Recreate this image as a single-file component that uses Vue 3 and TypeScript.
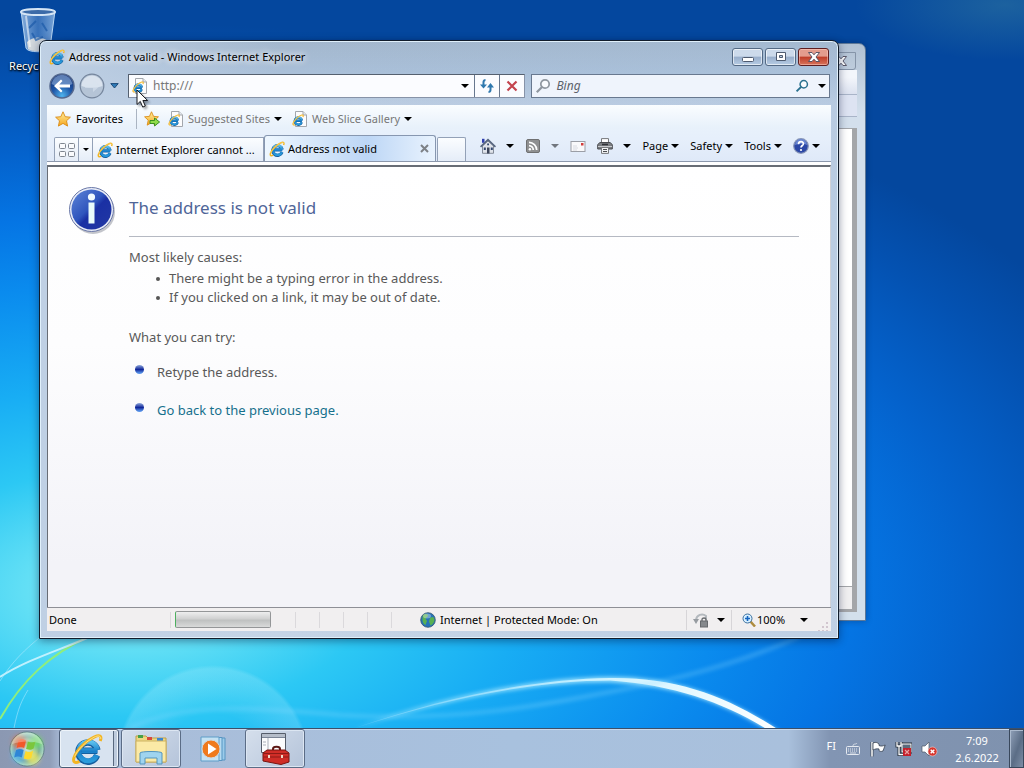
<script setup lang="ts">
import { ref } from 'vue'

interface MenuItem {
  id: string
  icon?: string
  text?: string
  arrow?: boolean
  dim?: boolean
}

const address = ref('http:///')
const query = ref('')

const commands: MenuItem[] = [
  { id: 'Home', icon: 'home', arrow: true },
  { id: 'Feeds', icon: 'rss', arrow: true, dim: true },
  { id: 'Read mail', icon: 'mail' },
  { id: 'Print', icon: 'print', arrow: true },
  { id: 'Page', text: 'Page', arrow: true },
  { id: 'Safety', text: 'Safety', arrow: true },
  { id: 'Tools', text: 'Tools', arrow: true },
  { id: 'Help', icon: 'help', arrow: true },
]
const causes = [
  'There might be a typing error in the address.',
  'If you clicked on a link, it may be out of date.',
]
</script>

<template>
  <svg class="defs" aria-hidden="true">
    <defs>
      <linearGradient id="gBlue" x1="0" y1="0" x2="0" y2="1">
        <stop offset="0" stop-color="#5cc0ee" /><stop offset=".5" stop-color="#1a7fc9" /><stop offset="1" stop-color="#2a9bdc" />
      </linearGradient>
      <linearGradient id="gStar" x1="0" y1="0" x2="0" y2="1">
        <stop offset="0" stop-color="#fff0a0" /><stop offset="1" stop-color="#f5a51c" />
      </linearGradient>
      <radialGradient id="gBall" cx=".5" cy=".9" r=".9">
        <stop offset="0" stop-color="#4fb4ee" /><stop offset=".45" stop-color="#1f57a8" /><stop offset="1" stop-color="#132f72" />
      </radialGradient>
      <linearGradient id="gInfo" x1="0" y1="0" x2="1" y2="1">
        <stop offset="0" stop-color="#5f86d8" /><stop offset=".45" stop-color="#2f55bd" /><stop offset=".55" stop-color="#1a30a4" /><stop offset="1" stop-color="#2238a4" />
      </linearGradient>
      <linearGradient id="gBin" x1="0" y1="0" x2="1" y2="0">
        <stop offset="0" stop-color="#a9c9ec" stop-opacity=".8" /><stop offset=".5" stop-color="#6a9ad4" stop-opacity=".5" /><stop offset="1" stop-color="#9fc3ea" stop-opacity=".75" />
      </linearGradient>
      <radialGradient id="gOrb" cx=".5" cy=".5" r=".5">
        <stop offset="0" stop-color="#d5f3e6" /><stop offset=".7" stop-color="#6fa8a4" /><stop offset="1" stop-color="#b5e2cc" />
      </radialGradient>
      <filter id="glow" x="-20%" y="-20%" width="140%" height="140%"><feGaussianBlur stdDeviation="3" /></filter>
    </defs>
    <symbol id="ie" viewBox="0 0 16 16">
      <path d="M13.2 8.9H5.2M13 11.2A4.8 4.8 0 1 1 13.2 8.6" fill="none" stroke="#155f9f" stroke-width="3.2" />
      <path d="M13.2 8.8H5.2M12.9 11A4.7 4.7 0 1 1 13.2 8.4" fill="none" stroke="url(#gBlue)" stroke-width="2.4" />
      <path d="M14.6 4C15.6 1.6 14.4.7 12 1.8 7.700 3.600 2.600 8.700 1.500 12.300c-.700 2.300.500 3 2.700 1.900" fill="none" stroke="#f3b521" stroke-width="1.5" />
      <path d="M14.900 3C15 1.300 13.500 1.100 11.600 2.100 7.500 4.200 3.200 8.500 1.800 11.800" fill="none" stroke="#fbe08a" stroke-width=".5" />
    </symbol>
    <symbol id="iepage" viewBox="0 0 16 16">
      <path d="M3.500.5H11l3.500 3.500v11.500h-11z" fill="#fcfcfd" stroke="#a3a7ad" />
      <path d="M11 .5V4h3.500" fill="#e5e9ee" stroke="#a3a7ad" />
      <use href="#ie" x="0" y="3" width="12" height="12" />
    </symbol>
    <symbol id="star" viewBox="0 0 16 16">
      <path d="M8 .8l2.200 4.900 5.200.5-3.900 3.600 1.100 5.300L8 12.400l-4.600 2.700 1.100-5.300L.6 6.200l5.200-.5z" fill="url(#gStar)" stroke="#d98a14" stroke-width=".9" stroke-linejoin="round" />
    </symbol>
    <symbol id="addstar" viewBox="0 0 16 16">
      <use href="#star" width="15" height="15" />
      <path d="M6 9.500h4.500V7L15.600 11l-5.100 4v-2.500H6z" fill="#8fdc4a" stroke="#2f8a1c" stroke-width=".9" />
    </symbol>
    <symbol id="home" viewBox="0 0 16 16">
      <path d="M2 .8h2.500v4H2z" fill="#2f3fae" />
      <path d="M2.500 8v7.300h11V8L8 3z" fill="#dfe3ea" stroke="#6b7482" stroke-width=".8" />
      <path d="M.5 8.800L8 1.600l7.500 7.200" fill="none" stroke="#56657f" stroke-width="1.600" />
      <path d="M7 9.500h2.500v6H7z" fill="#3b4458" /><path d="M3.800 9.500h2V12h-2zM10.800 9.500h2V12h-2zM7.200 5.500h1.800v1.800H7.200z" fill="#30456e" />
    </symbol>
    <symbol id="rss" viewBox="0 0 16 16">
      <rect x="1.500" y="1.500" width="13" height="13" rx="1.500" fill="#8f9091" stroke="#6f7071" />
      <g fill="none" stroke="#fff" stroke-width="1.700"><path d="M4 4.300A7.700 7.700 0 0 1 11.700 12M4 7.700A4.300 4.300 0 0 1 8.300 12" /></g>
      <circle cx="4.900" cy="11.200" r="1.200" fill="#fff" />
    </symbol>
    <symbol id="mail" viewBox="0 0 16 16">
      <rect x="1" y="3.500" width="14" height="10" fill="#f9f9fb" stroke="#9b9ea6" />
      <path d="M3 8h4M3 10h5M3 12h4" stroke="#d9dbe2" /><rect x="11" y="5" width="2.500" height="2.500" fill="#d33c3c" />
    </symbol>
    <symbol id="print" viewBox="0 0 16 16">
      <path d="M4.500 5V.6h7V5" fill="#fff" stroke="#77797c" />
      <path d="M3 4.500h10l2.300 2V11H.7V6.500z" fill="#7b7e82" stroke="#4a4c50" />
      <path d="M1 8.500h14" stroke="#c9cbce" /><path d="M4.500 9.500h7v5.900h-7z" fill="#f4f5f6" stroke="#77797c" />
      <path d="M6 11.500h4M6 13.500h4" stroke="#4b4d50" /><path d="M5 6.500h6" stroke="#303236" stroke-width="1.500" />
    </symbol>
    <symbol id="help" viewBox="0 0 16 16">
      <circle cx="8" cy="8" r="7.300" fill="#2c48a6" stroke="#8896b8" stroke-width="1.200" />
      <path d="M2 7a6 6 0 0 1 12 0c-3-1.800-8-1.600-12 0z" fill="#7d9be0" opacity=".75" />
      <path d="M5.500 6.200c.2-3.600 5.300-3 4.900-.2C10.200 7.500 8 7.700 8 9.600" fill="none" stroke="#fff" stroke-width="1.700" /><circle cx="8" cy="12" r="1.100" fill="#fff" />
    </symbol>
    <symbol id="close" viewBox="0 0 14 12">
      <path d="M1.500 1.500L5 1.500 7 3.800 9 1.500h3.500L9 6l3.500 4.500H9L7 8.200l-2 2.300H1.500L5 6z" fill="#fff" stroke="#4d4a5c" stroke-width=".9" stroke-linejoin="round" />
    </symbol>
    <symbol id="lens" viewBox="0 0 16 16">
      <circle cx="10" cy="6" r="4.200" fill="#fff" fill-opacity=".6" stroke="currentColor" stroke-width="1.700" />
      <path d="M7 9L1.800 14.200" stroke="currentColor" stroke-width="2.200" />
    </symbol>
  </svg>

  <div class="desktop">
    <svg class="wallpaper" viewBox="0 0 1024 728" preserveAspectRatio="none" aria-hidden="true">
      <defs>
        <filter id="soft"><feGaussianBlur stdDeviation="2" /></filter>
        <linearGradient id="swoosh"><stop offset="0" stop-color="#8fdcff" stop-opacity=".4" /><stop offset=".55" stop-color="#c9f1ff" /><stop offset="1" stop-color="#fff" /></linearGradient>
        <radialGradient id="bubble"><stop offset=".5" stop-color="#fff" stop-opacity="0" /><stop offset=".96" stop-color="#c8f4ff" stop-opacity=".2" /><stop offset="1" stop-color="#c8f4ff" stop-opacity="0" /></radialGradient>
        <radialGradient id="haze"><stop offset="0" stop-color="#3a82a0" stop-opacity=".45" /><stop offset="1" stop-color="#3a82a0" stop-opacity="0" /></radialGradient>
      </defs>
      <circle cx="213" cy="762" r="97" fill="url(#bubble)" />
      <path d="M355 728C450 694 540 678 610 677C680 677 735 700 786 736L768 730C725 704 680 686 610 682C540 681 450 698 355 728Z" fill="#a9e8ff" filter="url(#soft)" />
      <path d="M355 728C450 695 540 679 610 678C680 677 730 698 782 732L768 730C725 703 675 685 610 680.500C540 680.500 450 697 355 728Z" fill="url(#swoosh)" />
      <path d="M130 728C180 704 240 706 340 715C460 722 540 706 640 686C700 674 760 655 800 636" fill="none" stroke="#8fdcff" stroke-opacity=".4" stroke-width="3" filter="url(#soft)" />
      <path d="M0 719C22 680 50 654 90 636" fill="none" stroke="#8fee7c" stroke-width="2" />
      <path d="M0 677C26 660 60 650 92 636" fill="none" stroke="#d5f6ff" stroke-width="2" stroke-opacity=".85" />
      <path d="M0 681C12 662 24 650 44 634M14 728C18 708 22 700 28 690" fill="none" stroke="#bdeeff" stroke-opacity=".5" />
      <ellipse cx="1005" cy="5" rx="150" ry="55" fill="url(#haze)" />
    </svg>

    <div class="shortcut">
      <svg viewBox="0 0 40 48" width="40" height="48" aria-hidden="true">
        <path d="M3 5L8 42c1 5 23 5 24 0L37 5z" fill="url(#gBin)" stroke="#b7d5f2" />
        <ellipse cx="20" cy="6" rx="17" ry="3" fill="#3c6ba8" stroke="#d5e5f5" stroke-width="2" />
        <path d="M9 36c6-6 16-6 22 0l-1 7c-5 3-16 3-20 0z" fill="#e9e6e0" opacity=".85" />
        <path d="M11 22l7-7M14 27l4 7 7-3M24 17l5 8" stroke="#1b5aa8" stroke-width="2" fill="none" opacity=".7" />
        <path d="M8 10l4 31" stroke="#fff" stroke-opacity=".55" stroke-width="2" />
      </svg>
      <span>Recycle Bin</span>
    </div>

    <section class="window behind" aria-hidden="true">
      <div class="back-caption"><svg width="16" height="12"><use href="#close" /></svg></div>
      <div class="back-bar"></div>
      <div class="back-bar second"></div>
      <div class="back-page"></div>
      <div class="back-status"></div>
    </section>

    <main class="window browser">
      <header class="caption">
        <svg width="16" height="16"><use href="#ie" /></svg>
        <h1>Address not valid - Windows Internet Explorer</h1>
        <div class="caption-buttons">
          <button aria-label="Minimize"><svg width="14" height="12"><rect x="1.500" y="6.500" width="11" height="4" rx="1" fill="#fff" stroke="#4e5b70" /></svg></button>
          <button aria-label="Maximize"><svg width="14" height="12"><path fill-rule="evenodd" d="M2.500 1.500h9v8h-9zM5.500 4.500v2h3v-2z" fill="#fff" stroke="#4e5b70" /></svg></button>
          <button class="red" aria-label="Close"><svg width="14" height="12"><use href="#close" /></svg></button>
        </div>
      </header>

      <nav class="navigation">
        <button class="round" aria-label="Back">
          <svg viewBox="0 0 26 26" width="26" height="26"><circle cx="13" cy="13" r="12" fill="url(#gBall)" stroke="#54688e" stroke-width="1.500" /><path d="M2.500 11a10.600 10.600 0 0 1 21 0c-6 3-15 3-21 0z" fill="#9dbbe4" opacity=".55" /><path d="M5 13l7-6.500 1.500 1.600-3.200 3.300H21v3.200H10.300l3.200 3.300L12 19.500z" fill="#fff" /></svg>
        </button>
        <button class="round forward" aria-label="Forward">
          <svg viewBox="0 0 26 26" width="26" height="26"><circle cx="13" cy="13" r="11.800" fill="#b5c4d6" stroke="#75859c" stroke-width="1.200" /><path d="M2.500 13a10.500 10.500 0 0 1 21 0c-6 2-15 2-21 0z" fill="#e3ebf4" opacity=".8" /><path d="M21 13l-7-6v4H6v4h8v4z" fill="#d9e3ee" opacity=".6" /></svg>
        </button>
        <button class="recent" aria-label="Recent pages"><svg width="9" height="6"><path d="M.8.600h7.400L4.500 5z" fill="#2f7bb8" stroke="#1d4a78" /></svg></button>
        <div class="address">
          <svg width="16" height="16"><use href="#iepage" /></svg>
          <input v-model="address" aria-label="Address" type="text" />
          <button aria-label="Show address list"><i class="tri"></i></button>
          <button class="split" aria-label="Refresh"><svg width="16" height="14" viewBox="0 0 16 14"><path d="M6.500 1C4 1 4.500 3 4.500 7M9.500 13c2.500 0 2-2 2-6" fill="none" stroke="#2f78ae" stroke-width="2" /><path d="M1 5.500h7L4.500 9.500zM8 8.500h7L11.500 4z" fill="#2f78ae" /></svg></button>
          <button class="split" aria-label="Stop"><svg width="12" height="12"><path d="M1.500 1.500l9 9M10.500 1.500l-9 9" stroke="#c3434e" stroke-width="2.200" /></svg></button>
        </div>
        <form class="search" @submit.prevent>
          <svg class="pale" width="16" height="16"><use href="#lens" /></svg>
          <input v-model="query" aria-label="Search" type="text" placeholder="Bing" />
          <button class="go" aria-label="Search Bing"><svg width="14" height="14"><use href="#lens" /></svg></button>
          <button type="button" aria-label="Search options"><i class="tri"></i></button>
        </form>
      </nav>

      <div class="client">
        <div class="bars">
          <div class="favorites">
            <button class="strong"><svg width="16" height="16"><use href="#star" /></svg>Favorites</button>
            <button class="add" aria-label="Add to Favorites Bar"><svg width="16" height="16"><use href="#addstar" /></svg></button>
            <button><svg width="16" height="16"><use href="#iepage" /></svg>Suggested Sites<i class="tri"></i></button>
            <button><svg width="16" height="16"><use href="#iepage" /></svg>Web Slice Gallery<i class="tri"></i></button>
          </div>
          <div class="tabrow">
            <div class="tabs">
              <button class="quick" aria-label="Quick tabs"><svg width="18" height="15"><g fill="#fafbfd" stroke="#7f8690"><rect x="1.500" y="1.500" width="6" height="5" rx="1" /><rect x="10.500" y="1.500" width="6" height="5" rx="1" /><rect x="1.500" y="9.500" width="6" height="5" rx="1" /><rect x="10.500" y="9.500" width="6" height="5" rx="1" /></g></svg></button>
              <button class="list" aria-label="Tab list"><i class="tri small"></i></button>
              <button class="tab"><svg width="16" height="16"><use href="#ie" /></svg>Internet Explorer cannot ...</button>
              <div class="tab active">
                <svg width="16" height="16"><use href="#ie" /></svg>
                <span>Address not valid</span>
                <button aria-label="Close tab"><svg width="9" height="9"><path d="M1 1l7 7M8 1L1 8" stroke="#7d8186" stroke-width="2" /></svg></button>
              </div>
              <button class="newtab" aria-label="New tab"></button>
            </div>
            <div class="commands">
              <button v-for="item in commands" :key="item.id" :aria-label="item.id" :class="{ wide: item.icon && item.id !== 'Help' }">
                <svg v-if="item.icon" width="16" height="16"><use :href="'#' + item.icon" /></svg>
                <span v-if="item.text">{{ item.text }}</span>
                <i v-if="item.arrow" class="tri" :class="{ dim: item.dim }"></i>
              </button>
            </div>
          </div>
        </div>

        <article class="page">
          <svg class="info" viewBox="0 0 48 48" width="48" height="48" aria-hidden="true">
            <circle cx="25" cy="26" r="22" fill="#7a7f8c" opacity=".45" />
            <circle cx="23.500" cy="23.500" r="22" fill="#e9edf8" stroke="#6a78a8" />
            <circle cx="23.500" cy="23.500" r="20" fill="url(#gInfo)" />
            <circle cx="23.500" cy="11" r="3.600" fill="#f2fbff" /><rect x="20.500" y="16.500" width="6" height="21" fill="#e9fbfb" />
          </svg>
          <div class="message">
            <h2>The address is not valid</h2>
            <p>Most likely causes:</p>
            <ul class="causes"><li v-for="cause in causes" :key="cause">{{ cause }}</li></ul>
            <p class="try">What you can try:</p>
            <ul class="actions">
              <li>Retype the address.</li>
              <li><a href="#back">Go back to the previous page.</a></li>
            </ul>
          </div>
        </article>

        <footer class="status">
          <span class="done">Done</span>
          <div class="meter" role="progressbar" aria-label="Loading"></div>
          <i v-for="n in 5" :key="n" class="cell"></i>
          <div class="zone">
            <svg width="16" height="16"><circle cx="8" cy="8" r="7.300" fill="#2673b8" stroke="#36566f" stroke-width=".8" /><path d="M3 3c3-2 5-1 5 1L5.500 6.500 7 9l-1.500 4C3 12 1.500 8 3 3zM10 6c3-2 4-1 4.500 2-.5 3-2 4.500-4 5.500L9 9.500z" fill="#58b052" /><ellipse cx="7" cy="4" rx="4" ry="2.500" fill="#fff" opacity=".35" /></svg>
            Internet | Protected Mode: On
          </div>
          <button class="privacy" aria-label="Privacy report"><svg width="16" height="16"><path d="M3 8a6 6 0 0 1 10-4v4" fill="none" stroke="#b4b9be" stroke-width="2" /><path d="M0 7h6l-3 5z" fill="#979ca1" /><rect x="7.500" y="9" width="7" height="6" fill="#85888c" stroke="#66696d" /><path d="M9 9V7.500c0-2 4-2 4 0V9" fill="none" stroke="#66696d" stroke-width="1.300" /></svg><i class="tri"></i></button>
          <button class="zoom" aria-label="Zoom level"><svg width="14" height="14"><path d="M8 8l5 5.500" stroke="#ad8b3e" stroke-width="2.500" /><circle cx="5.500" cy="5.500" r="4.500" fill="#d7efff" stroke="#3c6f9e" /><path d="M5.500 3v5M3 5.500h5" stroke="#1464c0" stroke-width="1.600" /></svg><span>100%</span><i class="tri"></i></button>
          <svg class="grip" width="10" height="10" aria-hidden="true"><path d="M8 1h2v2H8zM4 5h2v2H4zM8 5h2v2H8zM0 9h2v1H0zM4 9h2v1H4zM8 9h2v1H8z" fill="#d2c6cf" /></svg>
        </footer>
      </div>
    </main>

    <svg class="pointer" viewBox="0 0 13 20" width="13" height="20" aria-hidden="true"><path d="M1 1v14.500l3.300-3.100 2.400 5.700 2.600-1.100-2.400-5.500h4.700z" fill="#fff" stroke="#15171c" /></svg>

    <nav class="taskbar" aria-label="Taskbar">
      <button class="start" aria-label="Start">
        <svg viewBox="0 0 40 40" width="40" height="38">
          <circle cx="20" cy="20" r="18" fill="url(#gOrb)" stroke="#5c7c86" />
          <g filter="url(#glow)" opacity=".8"><circle cx="12" cy="13" r="7" fill="#f5622e" /><circle cx="29" cy="13" r="7" fill="#6fe05a" /><circle cx="11" cy="27" r="7" fill="#58b6f0" /><circle cx="26" cy="29" r="7" fill="#f8ec5c" /></g>
          <path d="M11 11c3-2 5-1.500 8 0l-2 8c-3-1.500-5-1.500-8 0z" fill="#f3572a" /><path d="M21 12c3 1.500 5 1.500 8-.5l-2 8c-3 2-5 1.500-8 .5z" fill="#7cc63c" /><path d="M8.500 21c3-1.500 5-1.500 8 0l-2 8c-3-1.500-5-1.500-8 0z" fill="#2f86d6" /><path d="M18.500 22c3 1.500 5 1.500 8-.5l-2 8c-3 2-5 1.500-8 .5z" fill="#ffd92e" />
          <path d="M4 15a16.500 16.500 0 0 1 32 0c-9-4-22-4-32 0z" fill="#fff" opacity=".3" />
        </svg>
      </button>
      <button class="task stacked" aria-label="Internet Explorer"><svg width="32" height="32"><use href="#ie" /></svg></button>
      <button class="task open" aria-label="Windows Explorer">
        <svg viewBox="0 0 34 32" width="34" height="32"><path d="M2 3h10l2 2h18v24H2z" fill="#eed782" stroke="#bd9f49" /><path d="M4 2h5v3H4z" fill="#46a047" /><path d="M13 4h5v3h-5z" fill="#d64a3b" /><path d="M23 5h6v3h-6z" fill="#3c86cf" /><path d="M2 8h30v21H2z" fill="#fbeaa6" stroke="#cdb262" /><path d="M6 31V20c0-2 22-2 22 0v11h-5v-6H11v6z" fill="#9fd4ef" stroke="#5595bd" /></svg>
      </button>
      <button class="task idle" aria-label="Windows Media Player">
        <svg viewBox="0 0 28 28" width="28" height="28"><path d="M8 3h18v22H8z" fill="#9bcbea" stroke="#5795c2" /><path d="M5 2.500h18v23H5z" fill="#b6dbf1" stroke="#5795c2" /><path d="M2 2h18v24H2z" fill="#c5e2f3" stroke="#5e9dc8" /><circle cx="12" cy="14" r="9" fill="#ef7a1d" stroke="#d2d7dc" /><path d="M9 8.500v11l8.500-5.500z" fill="#fff" /></svg>
      </button>
      <button class="task open" aria-label="Tools">
        <svg viewBox="0 0 32 32" width="32" height="32"><path d="M2.500 .5h24v19h-24z" fill="#fbfcfd" stroke="#555d6a" /><path d="M3 1h23v3H3z" fill="#b5bdc9" /><path d="M3 4.500h23" stroke="#7b8596" /><path d="M9 5v13M4 9h3M4 12h3" stroke="#a9afb9" /><path d="M14 18v-2c0-3 7-3 7 0v2" fill="none" stroke="#5a1613" stroke-width="2" /><path d="M4 20l4-3h18l4 3v9l-8 2.500L4 28z" fill="#cf2d27" stroke="#771410" /><path d="M4.500 20.500h25M4.500 24h25" stroke="#8d1b16" /><path d="M9 22h2v3H9zM22 22h2v3h-2z" fill="#f0d9c8" /></svg>
      </button>
      <div class="tray">
        <span class="lang">FI</span>
        <button aria-label="Keyboard"><svg width="16" height="14"><rect x="1.500" y="4.500" width="13" height="8" rx="1" fill="none" stroke="#e4e9f0" /><path d="M3 7h10M3 9h10" stroke="#e4e9f0" stroke-dasharray="1 1" /><path d="M5 11h6M8 4c0-3 3-1 4-3" fill="none" stroke="#d4dbe5" /></svg></button>
        <button aria-label="Action Center"><svg width="16" height="16"><path d="M2 1v14.500" stroke="#3f4b5d" stroke-width="3" /><path d="M2 1v14.500" stroke="#fff" stroke-width="1.500" /><path d="M3 2c3-1.500 5 0 6 1v1.500c2 1 4 .5 6.200-.5L13 10c-2 .8-3 .5-4-.5V8C7 7.500 5 8 3 9z" fill="#fff" stroke="#35404f" stroke-width=".8" /></svg></button>
        <button aria-label="Network"><svg width="17" height="16"><path d="M7 3h9v8H7z" fill="#5c6a7c" stroke="#27303c" stroke-width="3" /><path d="M2 1v4h4V1M4 5v8.500h11" fill="none" stroke="#27303c" stroke-width="3" /><path d="M2 1v4h4V1M4 5v8.500h11" fill="none" stroke="#fff" stroke-width="1.300" /><rect x="7" y="3" width="9" height="8" fill="#5c6a7c" stroke="#fff" /><rect x="8" y="7" width="8" height="8" fill="#c4202b" /><path d="M10 9l4 4M14 9l-4 4" stroke="#e8a3a3" stroke-width="1.200" /></svg></button>
        <button aria-label="Volume"><svg width="17" height="16"><path d="M1 5h3l4-4v14l-4-4H1z" fill="#fff" stroke="#4c5666" stroke-width=".7" /><circle cx="11.500" cy="10.500" r="4.500" fill="#d6362e" stroke="#f7d0cc" stroke-width=".6" /><path d="M9.700 8.700l3.600 3.600M13.300 8.700l-3.600 3.600" stroke="#fff" stroke-width="1.400" /></svg></button>
        <time class="clock"><span>7:09</span><span>2.6.2022</span></time>
      </div>
      <button class="show" aria-label="Show desktop"></button>
    </nav>
  </div>
</template>

<style>
html, body { margin: 0; overflow: hidden; }
</style>

<style scoped>
* { box-sizing: border-box; }
.defs { position: absolute; width: 0; height: 0; }
button, input { font: inherit; color: inherit; margin: 0; padding: 0; border: 0; background: none; }
button { display: flex; align-items: center; justify-content: center; white-space: nowrap; }
svg { flex: none; display: block; }
.desktop {
  position: relative; height: 100vh; min-height: 480px; overflow: hidden;
  display: flex; flex-direction: column; justify-content: flex-end;
  font: 11px/16px "Noto Sans", "Open Sans", sans-serif; color: #000;
  background: radial-gradient(ellipse 106% 74% at 13% 77%, #8ce8f5 0, #62dff5 10%, #2cc8f4 22%, #18adf4 36%, #0a8bee 54%, #0575e4 66%, #0462cc 78%, #0452b2 90%, #04479e 100%);
}
.wallpaper { position: absolute; inset: 0 0 40px; width: 100%; height: calc(100% - 40px); }
.shortcut { position: absolute; left: 0; top: 6px; width: 76px; display: flex; flex-direction: column; align-items: center; gap: 4px; color: #fff; text-shadow: 0 1px 2px #000, 1px 1px 2px #000; white-space: nowrap; }
.tri { flex: none; width: 0; height: 0; border: 4px solid transparent; border-top-color: #000; border-bottom: 0; }
.tri.small { border-width: 3px 3px 0; }
.tri.dim { border-top-color: #71767e; }

.window { position: absolute; border-radius: 7px 7px 0 0; }
.behind {
  left: 60px; right: 158px; top: 43px; bottom: 147px; padding: 8px 8px 8px; display: flex; flex-direction: column;
  border: 1px solid #5e7897; background: linear-gradient(#b1c1d3, #d3dfec 12%, #d3e0ec); box-shadow: 0 0 6px rgba(0, 20, 60, .35);
}
.back-caption { align-self: flex-end; width: 40px; height: 18px; margin-right: 1px; border: 1px solid #8594a8; border-radius: 0 0 3px 3px; display: flex; align-items: center; justify-content: flex-end; padding-right: 6px; }
.back-bar { height: 25px; border-bottom: 1px solid #a9b4c8; background: linear-gradient(#f3f6fb 0 30%, #dbe1ef); }
.back-bar.second { height: 22px; background: #dde3f2; }
.back-page { flex: 1; margin-top: 11px; background: #fff; border: solid #a4a6a9; border-width: 1px 5px 1px 1px; }
.back-status { height: 25px; background: #f0eff0; border: solid #a4a6a9; border-width: 0 5px 3px 1px; }

.browser {
  left: 39px; right: 185px; top: 40px; bottom: 129px; padding: 0 7px 7px; display: flex; flex-direction: column;
  border: 1px solid #111c2b; background: linear-gradient(90deg, #bfd0e4, rgba(191, 208, 228, 0) 30%, rgba(170, 195, 222, .2)), linear-gradient(#a3b7cd 0, #a9bfd8 30px, #bccde2 64px, #c5d4e6 100%);
  box-shadow: inset 0 0 0 1px #e0f0fb, 0 2px 8px rgba(0, 15, 50, .45);
}
.caption { height: 32px; display: flex; align-items: center; gap: 4px; padding: 0 2px; }
.caption h1 { margin: 0; flex: 1; font-size: 11px; font-weight: 400; white-space: nowrap; text-shadow: 0 0 6px #fff, 0 0 8px #fff; }
.caption-buttons { display: flex; gap: 2px; }
.caption-buttons button { width: 31px; height: 18px; border: 1px solid #536984; border-radius: 3px; background: linear-gradient(#ccdaeb 0 45%, #98aecb 50%, #b6cce4); box-shadow: inset 0 0 0 1px rgba(255, 255, 255, .6); }
.caption-buttons .red { border-color: #5e1e20; background: linear-gradient(#e39c8d 0 45%, #bf3d28 50%, #d7735b); box-shadow: inset 0 0 0 1px rgba(255, 210, 200, .5); }
.navigation { height: 26px; display: flex; align-items: center; }
.round { width: 26px; margin-left: 2px; }
.forward { margin-left: 4px; }
.recent { width: 14px; margin: 0 7px 0 2px; }
.address, .search { height: 24px; display: flex; align-items: stretch; border: 1px solid #68788f; background: #fbfcff; min-width: 0; font-size: 12px; }
.address { flex: 4; color: #777; border-color: #55606f #8793a8 #8793a8 #55606f; }
.address > svg, .search > svg { align-self: center; margin-left: 3px; }
input { flex: 1; min-width: 0; width: 0; outline: 0; }
.address input { padding-left: 5px; }
.address button { width: 18px; }
.address .split { width: 25px; border-left: 1px solid #68788f; }
.search { flex: 3; margin: 0 1px 0 6px; background: #eff4fc; }
.search input { padding-left: 5px; font-style: italic; }
.search input::placeholder { color: #5b626b; opacity: 1; }
.search button { width: 14px; }
.search .go { width: 20px; padding-right: 6px; color: #2a718f; }
.pale { color: #8e969f; }

.client { flex: 1; min-height: 0; margin-top: 6px; display: flex; flex-direction: column; background: #fff; }
.bars { background: linear-gradient(#fafdff, #e8f1fb 22px, #e6effb 60%, #dfe9f8); border-bottom: 1px solid #8c98ac; }
.favorites { height: 28px; display: flex; align-items: center; padding-left: 8px; color: #777; }
.favorites button { gap: 4px; margin-right: 10px; }
.favorites .strong { color: #000; padding-right: 13px; height: 20px; border-right: 1px solid #aab4c2; margin-right: 7px; gap: 5px; }
.favorites .add { margin-right: 8px; }
.tabrow { height: 28px; display: flex; align-items: stretch; padding: 0 11px 0 7px; }
.tabs { display: flex; align-items: flex-end; flex: 0 1 412px; min-width: 0; }
.quick, .list, .tab, .newtab { height: 24px; border: 1px solid #93a1b7; border-bottom: 0; background: linear-gradient(#fbfdff, #e5edf8); }
.quick { width: 25px; border-radius: 2px 0 0; }
.list { width: 14px; border-left: 0; }
.tab { flex: 1; min-width: 0; justify-content: flex-start; gap: 3px; padding: 0 4px; border-left: 0; overflow: hidden; }
.tab.active { height: 26px; display: flex; align-items: center; border: 1px solid #8797b0; border-width: 1px 1px 0; border-radius: 3px 3px 0 0; background: linear-gradient(90deg, #eef7ff, rgba(180, 208, 243, .5) 60%, #e9f3fe), #c5dcf7; white-space: nowrap; }
.tab.active span { flex: 1; }
.tab.active button { padding: 0 2px; }
.newtab { width: 29px; margin-left: 1px; border-radius: 2px 2px 0 0; }
.commands { flex: 1; display: flex; align-items: center; justify-content: space-between; margin: 0 0 2px 14px; }
.commands button { gap: 3px; }
.commands .wide { gap: 10px; }

.page { flex: 1; min-height: 0; overflow: hidden; display: flex; align-items: flex-start; gap: 13px; margin: 3px 0 0; padding: 19px 31px 0 20px; border: solid #686d75; border-width: 2px 1px 0; border-right-color: #d0d2d8; color: #595959; font-size: 13px; line-height: 19px; background: linear-gradient(#fff, #fdfdfe 40%, #f3f3f8 90%); }
.message { flex: 1; min-width: 0; }
.message h2 { margin: 0; padding-bottom: 6px; border-bottom: 1px solid #b5b9c2; color: #4f6598; font-size: 17px; line-height: 44px; font-weight: 400; margin-bottom: 11px; }
.message p { margin: 0; }
ul { list-style: none; margin: 0; padding: 0; }
.causes { padding: 2px 0 0 40px; }
.causes li { position: relative; }
.causes li::before { content: ""; position: absolute; left: -13px; top: 8px; width: 4px; height: 4px; border-radius: 50%; background: #555; }
.message .try { margin-top: 21px; }
.actions { display: flex; flex-direction: column; gap: 19px; padding: 16px 0 0 28px; }
.actions li { position: relative; }
.actions li::before { content: ""; position: absolute; left: -22px; top: 2px; width: 9px; height: 9px; border-radius: 50%; background: linear-gradient(#8fa8dc, #10269a 50%, #5a96ea 90%); }
.actions a { color: #16708c; text-decoration: none; }

.status { height: 24px; display: flex; align-items: center; padding: 0 3px 0 2px; border-top: 1px solid #8e8f96; background: #f1eff0; }
.done { flex: 0 0 122px; border-right: 1px solid #dbd9dc; margin-right: 4px; }
.meter { width: 96px; height: 17px; border: 1px solid #949698; border-left-color: #4daf5f; border-radius: 2px; background: linear-gradient(#eeeeef, #d0d1d1 45%, #bfc1c1 55%, #d9dada); margin-right: 1px; }
.cell { width: 24px; height: 16px; border-right: 1px solid #dbd9dc; }
.zone { flex: 1; min-width: 0; display: flex; align-items: center; gap: 4px; padding-left: 28px; white-space: nowrap; }
.privacy { height: 20px; width: 46px; gap: 8px; border: solid #d7d5d8; border-width: 0 1px; }
.zoom { gap: 1px; width: 86px; justify-content: flex-start; padding-left: 10px; }
.zoom .tri { margin-left: auto; margin-right: 10px; }
.grip { align-self: flex-end; }
.pointer { position: absolute; left: 136px; top: 89px; filter: drop-shadow(2px 2px 1px rgba(0, 0, 0, .35)); }

.taskbar { position: relative; height: 40px; display: flex; align-items: stretch; border-top: 1px solid #3c4f69; box-shadow: inset 0 1px 0 #c7d9ee; background: linear-gradient(90deg, #8b98b2 0, #8f9eb8 50px, #a9bcd8 62px, #a8c1de 50%, #a9c0dc 77%, #8295b3 81%, #7f92ae 100%); }
.start { width: 54px; margin-right: 5px; }
.task { width: 60px; margin-right: 2px; border-radius: 3px; }
.task.stacked { width: 60px; border: 1px solid #4b5c75; padding-right: 4px; background: linear-gradient(90deg, #d8e3f0 0 53px, #59697f 53px 54px, #bdcbdd 54px); box-shadow: inset 0 0 0 1px #eef4fa; }
.task.open { border: 1px solid #5b6c86; background: linear-gradient(135deg, #d5dfec, #b5c4da); box-shadow: inset 0 0 0 1px #dce6f2; }
.tray { margin-left: auto; display: flex; align-items: center; gap: 9px; color: #fff; }
.lang { align-self: flex-start; margin-top: 9px; }
.clock { display: flex; flex-direction: column; align-items: center; width: 60px; line-height: 17px; }
.show { width: 15px; margin-left: 2px; border: 1px solid #39485c; background: linear-gradient(110deg, #91a1b9, #5b6d86 55%, #7d8da5); box-shadow: inset 1px 1px 0 #aab9cd; }
</style>
